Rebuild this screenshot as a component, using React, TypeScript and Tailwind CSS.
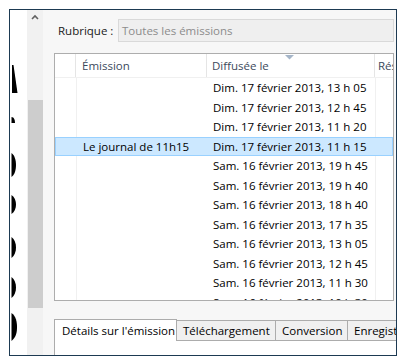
import React from "react";

const ROWS = [
  { emission: "", date: "Dim. 17 février 2013, 13 h 05" },
  { emission: "", date: "Dim. 17 février 2013, 12 h 45" },
  { emission: "", date: "Dim. 17 février 2013, 11 h 20" },
  { emission: "Le journal de 11h15", date: "Dim. 17 février 2013, 11 h 15", selected: true },
  { emission: "", date: "Sam. 16 février 2013, 19 h 45" },
  { emission: "", date: "Sam. 16 février 2013, 19 h 40" },
  { emission: "", date: "Sam. 16 février 2013, 18 h 40" },
  { emission: "", date: "Sam. 16 février 2013, 17 h 35" },
  { emission: "", date: "Sam. 16 février 2013, 13 h 05" },
  { emission: "", date: "Sam. 16 février 2013, 12 h 45" },
  { emission: "", date: "Sam. 16 février 2013, 11 h 30" },
  { emission: "", date: "Sam. 16 février 2013, 10 h 30" },
];

const TABS = [
  { label: "Téléchargement", w: "w-[99px]" },
  { label: "Conversion", w: "w-[72px]" },
  { label: "Enregistrement", w: "w-[100px]" },
];

// cropped big glyphs peeking out on the left edge
function GlyphStrip() {
  return (
    <svg width="17" height="344" viewBox="10 10 17 344" className="block">
      <path d="M12 65 L13.5 65 L17.5 93 L12 93 Z" fill="#000" />
      <path d="M11.5 117 C 14 117, 15 120, 15 123 L11.5 123 Z" fill="#000" />
      {[
        [153, 177],
        [195, 214],
        [237, 258],
        [277, 298],
      ].map(([a, b]) => (
        <path
          key={a}
          d={`M11.5 ${a} C 17.5 ${a + 4}, 17.5 ${b - 4}, 11.5 ${b} Z`}
          fill="#000"
        />
      ))}
      <path d="M11.5 313 C 16 316, 17 322, 17 327 C 17 333, 16 337, 11.5 341 Z" fill="#000" />
    </svg>
  );
}

export default function App() {
  return (
    <div
      className="w-[402px] h-[362px] bg-white pt-[9px] pl-[9px] overflow-hidden"
      style={{ fontFamily: '"Open Sans", "Noto Sans", sans-serif' }}
    >
      <div className="w-[388px] h-[347px] border border-[#1d3a52] flex overflow-hidden bg-[#f7f7f7] text-[11.5px] text-black">
        <div className="w-[17px] shrink-0 bg-white">
          <GlyphStrip />
        </div>
        <div className="w-[16px] shrink-0 bg-[#f1f1f1] flex flex-col">
          <div className="h-[90px] flex justify-center pt-[4px]">
            <svg width="8" height="6" viewBox="0 0 8 6">
              <path d="M1 5 L4 2 L7 5" stroke="#606060" strokeWidth="1.6" fill="none" />
            </svg>
          </div>
          <div className="h-[208px] ml-[1px] bg-[#cdcdcd]" />
        </div>
        <div className="flex-1 min-w-0 flex flex-col pl-[11px] pr-[2px] pt-[9px]">
          <div className="flex items-center h-[23px]">
            <span className="w-[64px] pl-[4px] text-[#1a1a1a]">Rubrique :</span>
            <div className="flex-1 h-[23px] border border-[#d9d9d9] bg-[#efefef] flex items-center pl-[3px] text-[#8c8c8c]">
              Toutes les émissions
            </div>
          </div>

          <div className="mt-[11px] h-[248px] border border-[#adadad] bg-white flex flex-col overflow-hidden">
            <div className="relative h-[24px] shrink-0 flex text-[#3c4a5c] border-b border-[#f0f0f0]">
              <div className="w-[21px] border-r border-[#e5e5e5]" />
              <div className="w-[131px] border-r border-[#e5e5e5] pl-[6px] flex items-center">Émission</div>
              <div className="w-[168px] border-r border-[#e5e5e5] pl-[5px] flex items-center">Diffusée le</div>
              <div className="flex-1 pl-[3px] flex items-center whitespace-nowrap overflow-hidden">Résumé</div>
              <svg className="absolute left-[230px] top-[1px]" width="9" height="5" viewBox="0 0 9 5">
                <path d="M0 0 L9 0 L4.5 4.5 Z" fill="#a5b5c8" />
              </svg>
            </div>
            <div className="relative flex-1 overflow-hidden">
              <div className="absolute left-[21px] top-0 bottom-0 w-px bg-[#f0f0f0]" />
              <div className="absolute left-[320px] top-0 bottom-0 w-px bg-[#f0f0f0]" />
              {ROWS.map((r) => (
                <div
                  key={r.date}
                  className={
                    "relative h-[19.5px] flex items-center whitespace-nowrap " +
                    (r.selected ? "bg-[#cce8ff] border border-[#99d1ff]" : "border border-transparent")
                  }
                >
                  <div className="w-[21px] shrink-0" />
                  <div className="w-[131px] shrink-0 pl-[6px]">{r.emission}</div>
                  <div className="w-[168px] shrink-0 pl-[5px]">{r.date}</div>
                </div>
              ))}
            </div>
          </div>

          <div className="mt-[18px] flex-1 flex flex-col -mr-[2px]">
            <div className="flex h-[22px] items-end whitespace-nowrap overflow-hidden">
              <div className="h-[22px] w-[123px] shrink-0 bg-white border border-b-0 border-[#acacac] pl-[7px] flex items-center relative z-10">
                Détails sur l'émission
              </div>
              {TABS.map((t) => (
                <div
                  key={t.label}
                  className={
                    "h-[21px] shrink-0 overflow-hidden bg-[#f0f0f0] border border-l-0 border-[#acacac] flex items-center pl-[6px] " +
                    t.w
                  }
                >
                  {t.label}
                </div>
              ))}
            </div>
            <div className="flex-1 bg-white border-t border-l border-[#acacac] -mt-px" />
          </div>
        </div>
      </div>
    </div>
  );
}
